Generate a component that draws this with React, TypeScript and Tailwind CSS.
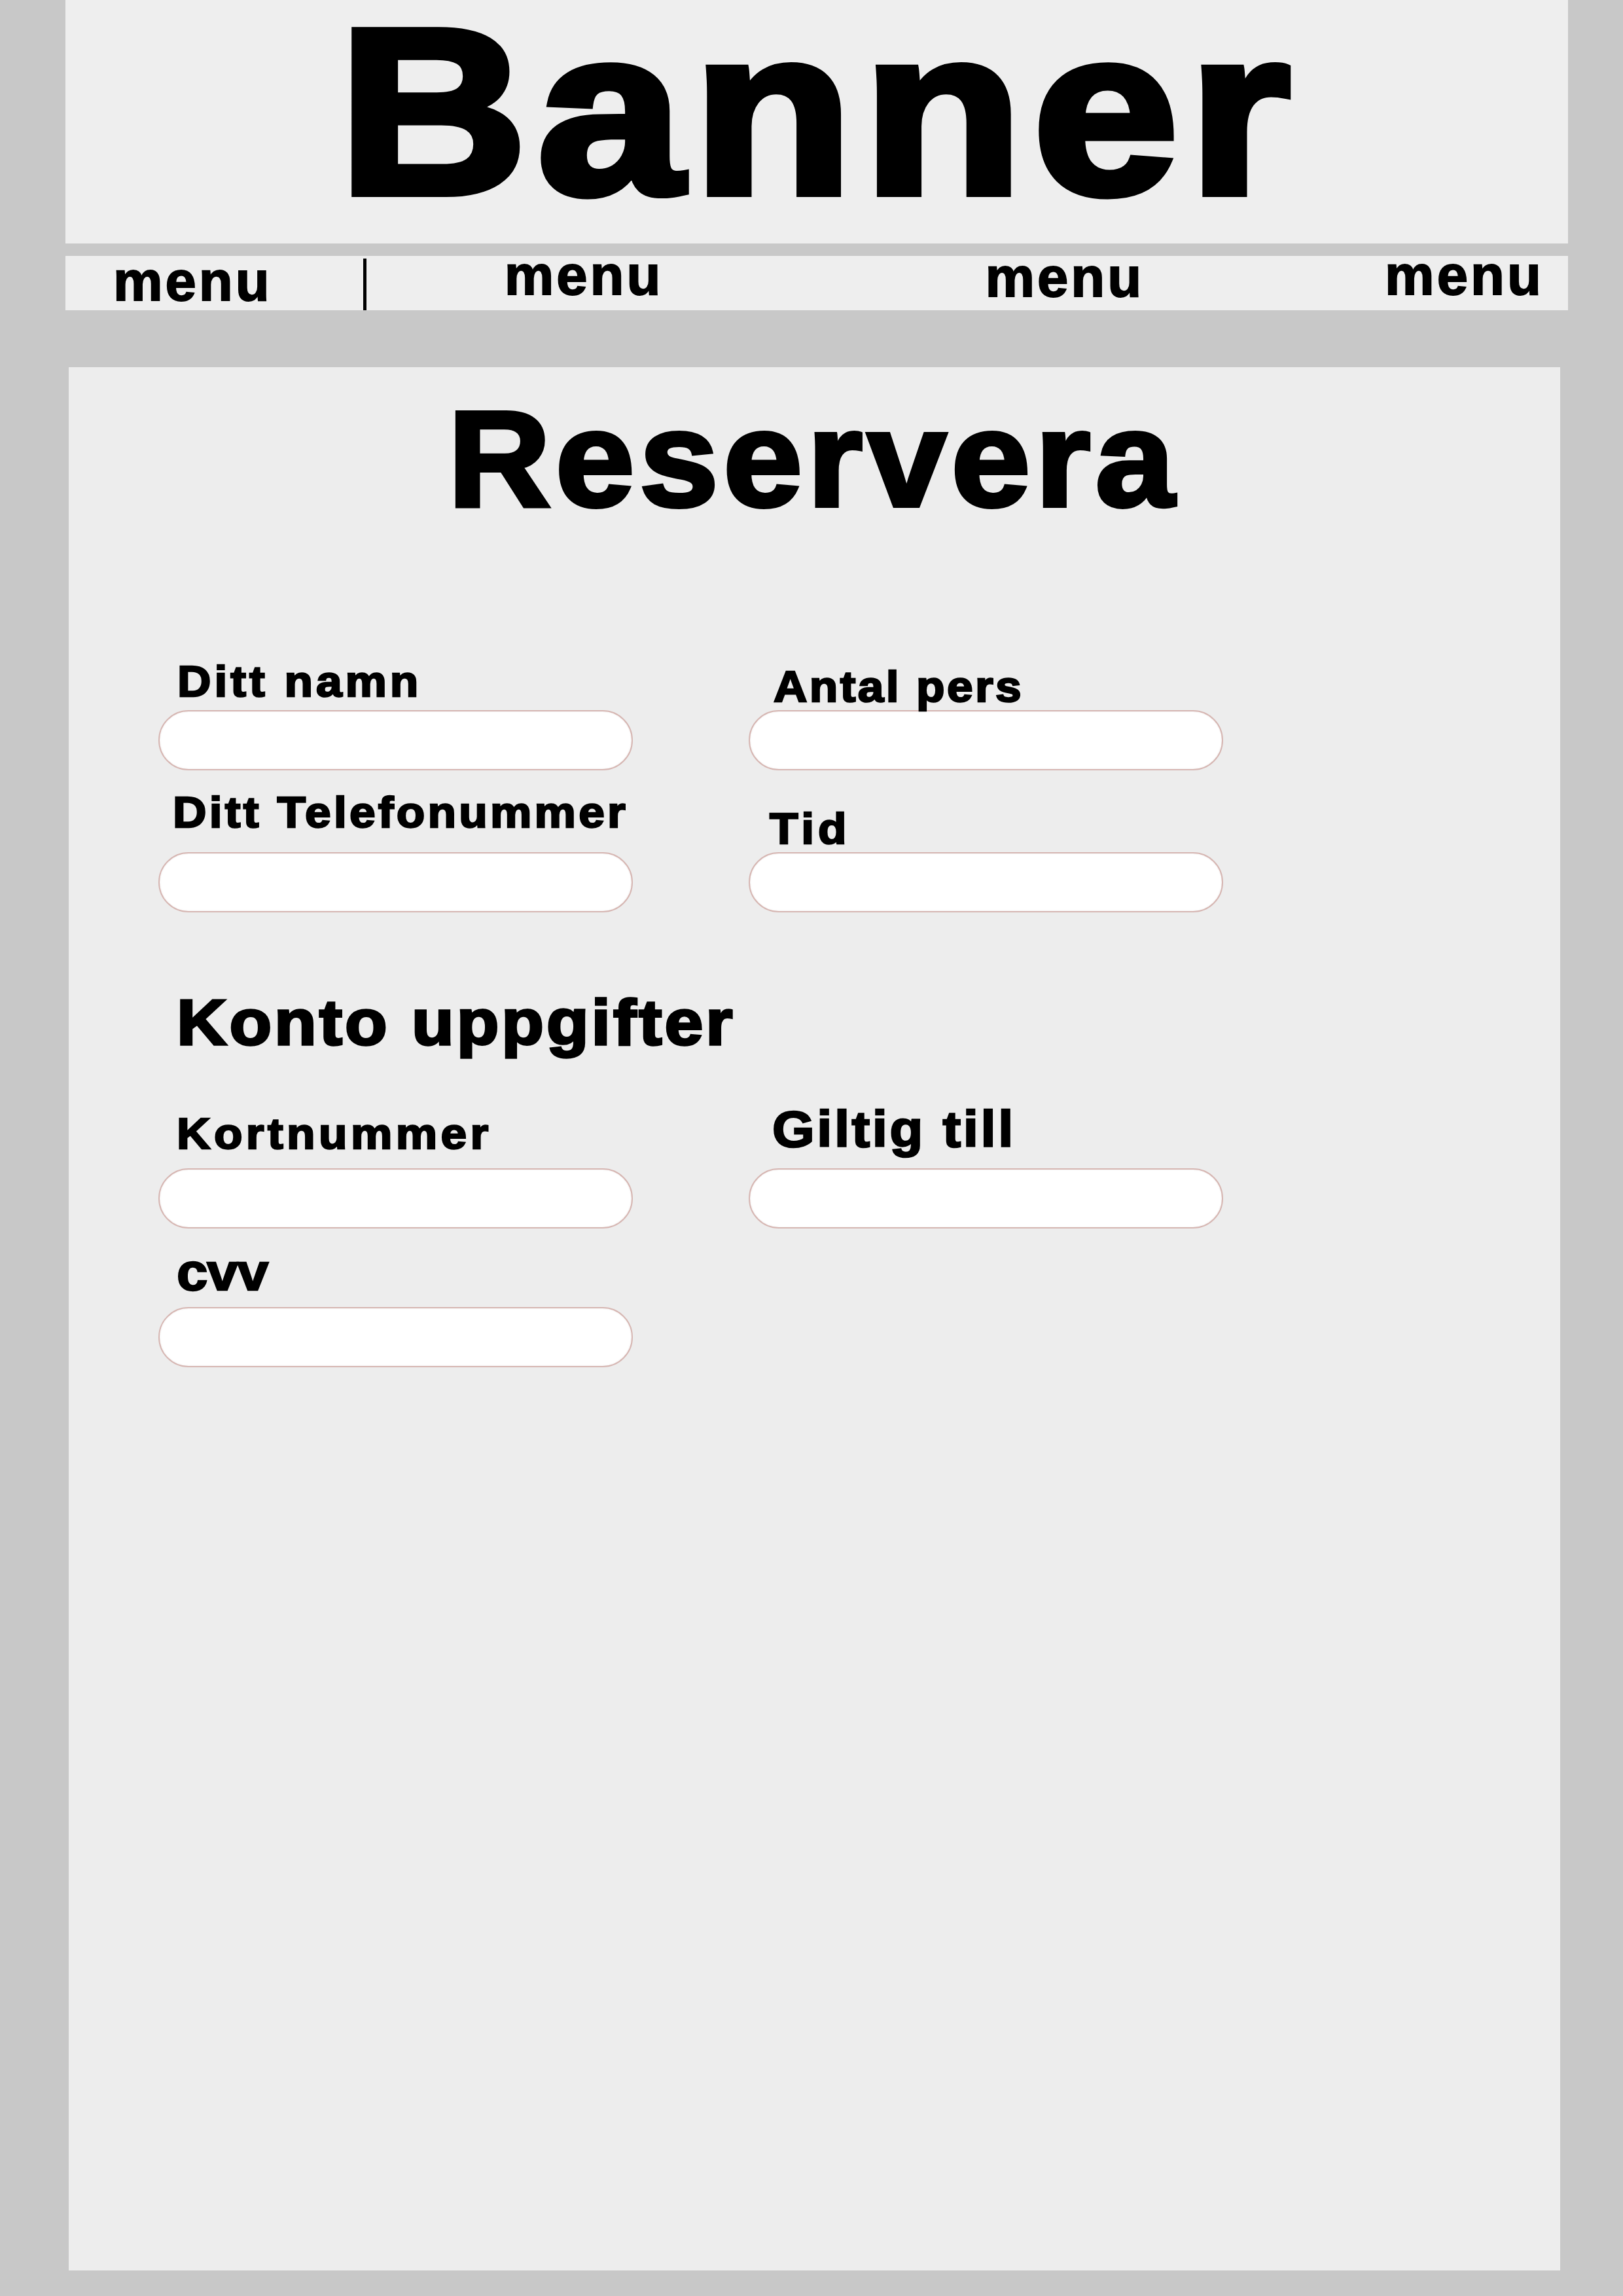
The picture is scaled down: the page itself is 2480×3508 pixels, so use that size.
const Field = ({
  label,
  labelClass,
}: {
  label: string;
  labelClass: string;
}) => {
  return (
    <div className="flex flex-col">
      <span
        className={`origin-left scale-x-[1.08] self-start font-bold leading-none text-black [-webkit-text-stroke:2.5px_#000] ${labelClass}`}
      >
        {label}
      </span>
      <div className="h-[92px] w-[725px] rounded-full border-2 border-[#d6b6b2] bg-white shadow-[inset_0_0_3px_rgba(0,0,0,0.08)]"></div>
    </div>
  );
};

const App = () => {
  return (
    <div className="min-h-[3508px] bg-[#c8c8c8] pl-[100px] font-['Liberation_Sans',Arial,sans-serif]">
      {/* Banner */}
      <div className="flex h-[372px] w-[2296px] items-start justify-center bg-[#eeeeee]">
        <h1 className="ml-[8px] scale-x-[1.11] text-[360px] font-bold leading-[340px] tracking-[14px] text-black [-webkit-text-stroke:12px_#000]">
          Banner
        </h1>
      </div>

      {/* Nav */}
      <nav className="mt-[19px] flex h-[83px] w-[2296px] items-start bg-[#eeeeee] text-[85px] font-bold leading-[60px] tracking-[4px] text-black [-webkit-text-stroke:2px_#000]">
        <span className="ml-[73px] mt-[9px]">menu</span>
        <div className="ml-[139px] mt-[4px] h-[79px] w-[5px] bg-black"></div>
        <span className="ml-[211px] mt-0">menu</span>
        <span className="ml-[492px] mt-[3px]">menu</span>
        <span className="ml-[368px] mt-0">menu</span>
      </nav>

      {/* Main */}
      <main className="ml-[5px] mt-[87px] h-[2908px] w-[2279px] bg-[#ededed] pl-[137px] pt-[37px]">
        <div className="-ml-[137px] flex justify-center">
          <h2 className="-ml-[2px] scale-x-[1.05] text-[207px] font-bold leading-none tracking-[7px] text-black [-webkit-text-stroke:6px_#000]">
            Reservera
          </h2>
        </div>

        <div className="mt-[203px] grid grid-cols-[725px_725px] items-end gap-x-[177px]">
          <Field label="Ditt namn" labelClass="ml-[29px] mb-[11px] text-[66px] tracking-[4.6px]" />
          <Field label="Antal pers" labelClass="ml-[38px] mb-[3px] text-[66px] tracking-[3.1px]" />
        </div>

        <div className="mt-[31px] grid grid-cols-[725px_725px] items-end gap-x-[177px]">
          <Field label="Ditt Telefonummer" labelClass="ml-[22px] mb-[28px] text-[66px] tracking-[3.9px]" />
          <Field label="Tid" labelClass="ml-[32px] mb-[3px] text-[66px] tracking-[5.5px]" />
        </div>

        <h3 className="ml-[28px] mt-[119px] origin-left scale-x-[1.08] text-[98px] font-bold leading-none tracking-[3.7px] text-black [-webkit-text-stroke:3.5px_#000]">
          Konto uppgifter
        </h3>

        <div className="mt-[76px] grid grid-cols-[725px_725px] items-end gap-x-[177px]">
          <Field label="Kortnummer" labelClass="ml-[28px] mb-[20px] text-[66px] tracking-[5px]" />
          <Field label="Giltig till" labelClass="ml-[36px] mb-[21px] text-[77px] tracking-[3.3px]" />
        </div>

        <div className="mt-[27px] grid grid-cols-[725px_725px] items-end gap-x-[177px]">
          <Field label="cvv" labelClass="ml-[28px] mb-[14px] text-[79px] tracking-[-1px]" />
        </div>
      </main>
    </div>
  );
};

export default App;
